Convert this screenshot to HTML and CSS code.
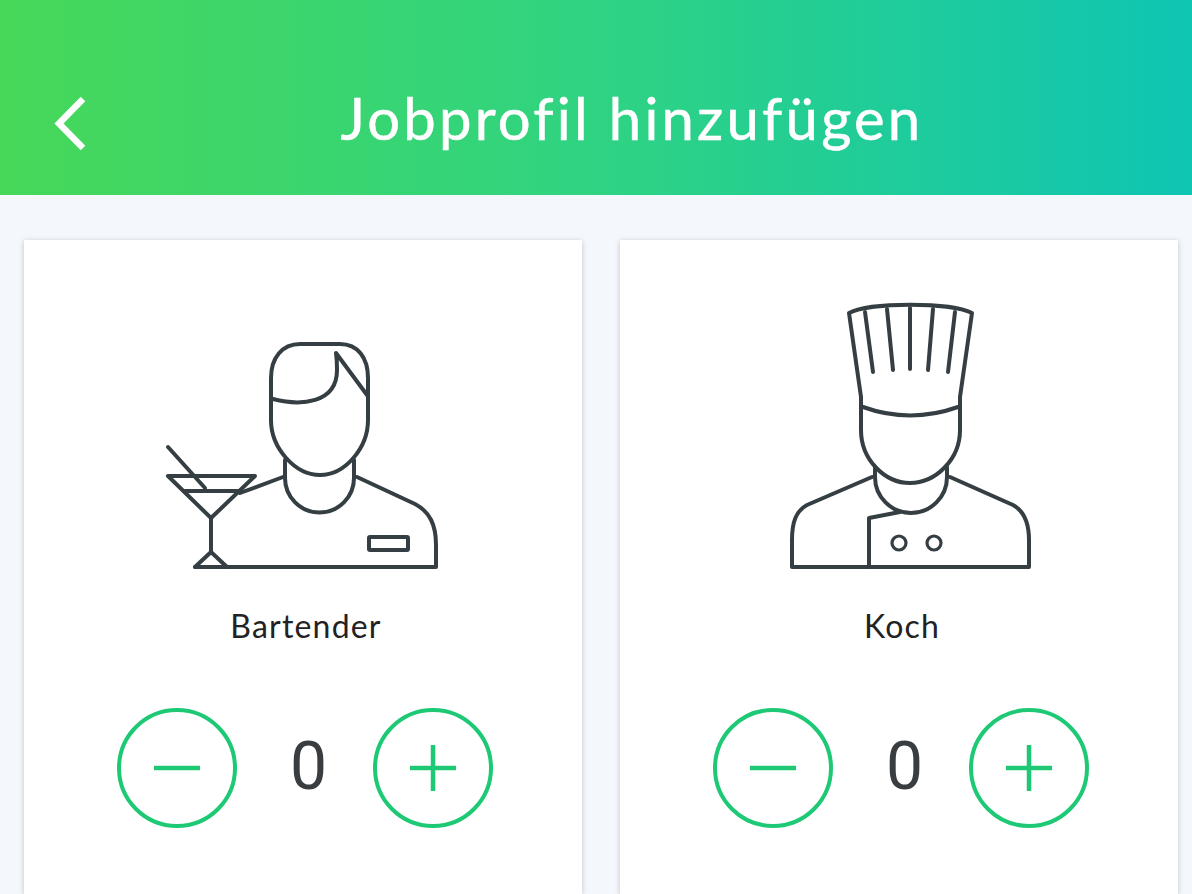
FILE: index.html
```html
<!DOCTYPE html>
<html>
<head>
<meta charset="utf-8">
<title>Jobprofil hinzufügen</title>
<link rel="stylesheet" href="styles.css">
</head>
<body>
<div class="header">
	<a class="back" href="#">
		<svg width="40" height="60" viewBox="0 0 40 60"><path d="M32 5 L8 29.500 L32 54"/></svg>
	</a>
	<h1>Jobprofil hinzufügen</h1>
</div>
<div class="cards">
	<div class="card">
		<svg class="job_icon" width="320" height="300" viewBox="3 -30 320 300">
			<path d="M160 24 H200 C218 24 228 38 228 58 V100 C228 128 205 155 180 155 C155 155 131 128 131 100 V58 C131 38 142 24 160 24 Z"/>
			<path d="M133 79 C160 86 197 84 197 50 Q197 40 196 33 L227 75"/>
			<path d="M145 140 V158 A34.500 34.500 0 0 0 214 158 V140"/>
			<path d="M143 157 L100 173"/>
			<path d="M217 157 L275 184 C290 192 296 205 296 225 V247 H55"/>
			<rect x="229" y="217" width="39" height="13" rx="1"/>
			<path d="M28 156 H115 L71 198 Z"/>
			<path d="M45 171 H100"/>
			<path d="M28 127 L65 168"/>
			<path d="M71 198 V232 L55 247 M71 232 L87 247"/>
		</svg>
		<div class="job_name">Bartender</div>
		<div class="stepper">
			<a class="round_btn" href="#"><svg width="46" height="46" viewBox="0 0 46 46"><path d="M0 23 H46"/></svg></a>
			<span class="count">0</span>
			<a class="round_btn" href="#"><svg width="46" height="46" viewBox="0 0 46 46"><path d="M0 23 H46 M23 0 V46"/></svg></a>
		</div>
	</div>
	<div class="card">
		<svg class="job_icon" width="320" height="300" viewBox="-31 0 320 300">
			<path d="M79 23 C100 12 180 12 202 23 L190 107 V140 C190 170 165 193 140 193 C115 193 91 170 91 140 V107 Z"/>
			<path d="M93 117 Q140 134 188 117"/>
			<path d="M95 22 L103 82 M117 19 L123 80 M140 18 V79 M163 19 L158 80 M185 22 L178 82"/>
			<path d="M105 177 V187 A36 36 0 0 0 177 187 V177"/>
			<path d="M102 187 L37 215 C26 221 22 232 22 250 V277 H259 V250 C259 232 254 221 243 215 L180 187"/>
			<path d="M99 277 V228 L130 222"/>
			<circle class="thin" cx="129" cy="253" r="7"/>
			<circle class="thin" cx="164" cy="253" r="7"/>
		</svg>
		<div class="job_name">Koch</div>
		<div class="stepper">
			<a class="round_btn" href="#"><svg width="46" height="46" viewBox="0 0 46 46"><path d="M0 23 H46"/></svg></a>
			<span class="count">0</span>
			<a class="round_btn" href="#"><svg width="46" height="46" viewBox="0 0 46 46"><path d="M0 23 H46 M23 0 V46"/></svg></a>
		</div>
	</div>
</div>
</body>
</html>
```

FILE: styles.css
```css
html, body {
height:894px;
overflow:hidden;
}

body {
margin:0;
background:#f4f7fb;
font-family:"Lato", "Liberation Sans", sans-serif;
}

.header {
box-sizing:border-box;
height:195px;
padding-top:40px;
background:linear-gradient(90deg, #47d859 0%, #2fd382 50%, #0fc5b3 100%);
display:flex;
align-items:center;
justify-content:center;
position:relative;
}

.header h1 {
margin:0 0 0 72px;
font-size:58px;
font-weight:400;
letter-spacing:3.200px;
color:#fff;
-webkit-text-stroke:0.5px #fff;
}

.back {
position:absolute;
left:51px;
top:94px;
display:block;
height:60px;
}

.back path {
fill:none;
stroke:#fff;
stroke-width:6.500;
}

.cards {
display:flex;
gap:38px;
padding:45px 14px 0 24px;
}

.card {
box-sizing:border-box;
flex:1;
height:654px;
background:#fff;
box-shadow:0 1px 5px rgba(60,70,90,0.28);
padding-top:50px;
display:flex;
flex-direction:column;
align-items:center;
}

.job_icon {
display:block;
}

.job_icon path, .job_icon rect, .job_icon circle {
fill:none;
stroke:#343e43;
stroke-width:4;
stroke-linejoin:round;
stroke-linecap:round;
}

.job_icon .thin {
stroke-width:3.200;
}

.job_name {
margin:16px 0 0 6px;
font-size:32px;
line-height:40px;
letter-spacing:1.200px;
color:#222;
}

.stepper {
width:376px;
margin:62px 0 0 4px;
display:flex;
justify-content:space-between;
align-items:center;
}

.round_btn {
box-sizing:border-box;
width:120px;
height:120px;
border:4px solid #1ec975;
border-radius:50%;
display:flex;
align-items:center;
justify-content:center;
}

.round_btn path {
fill:none;
stroke:#1ec975;
stroke-width:4.500;
}

.count {
padding:0 0 2px 7px;
font-family:"Roboto", "Liberation Sans", sans-serif;
font-size:66px;
font-weight:400;
line-height:118px;
color:#3a3d40;
}
```
